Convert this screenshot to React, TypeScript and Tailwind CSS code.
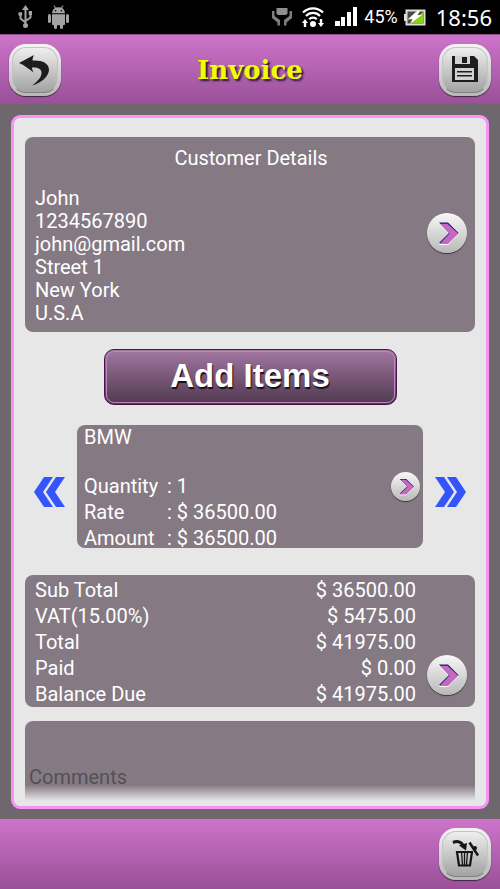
import type { ReactNode } from 'react'

const customer = ['John', '1234567890', 'john@gmail.com', 'Street 1', 'New York', 'U.S.A']

const itemRows = [
  { label: 'Quantity', value: '1' },
  { label: 'Rate', value: '$ 36500.00' },
  { label: 'Amount', value: '$ 36500.00' },
]

const totals = [
  { label: 'Sub Total', value: '$ 36500.00' },
  { label: 'VAT(15.00%)', value: '$ 5475.00' },
  { label: 'Total', value: '$ 41975.00' },
  { label: 'Paid', value: '$ 0.00' },
  { label: 'Balance Due', value: '$ 41975.00' },
]

function StatusBar() {
  return (
    <div className="flex h-[34px] items-center justify-between bg-black pl-[18px] pr-2 text-white">
      <div className="flex items-center gap-4">
        {/* USB */}
        <svg width="14" height="24" viewBox="0 0 14 24" fill="none" stroke="#a3a3a3" strokeWidth="2">
          <path d="M7.500 4v16M2.500 9v4.500l5 4M12.500 8v4.500l-5 3.500" />
          <path d="M7.500 0l3.500 5h-7z" fill="#a3a3a3" stroke="none" />
          <circle cx="7.500" cy="20.500" r="2.500" fill="#a3a3a3" stroke="none" />
          <circle cx="2.300" cy="9" r="2.100" fill="#a3a3a3" stroke="none" />
          <path d="M10.700 6h3.300v4h-3.300z" fill="#a3a3a3" stroke="none" />
        </svg>
        {/* Android robot */}
        <svg width="21" height="24" viewBox="0 0 21 24" fill="#a3a3a3">
          <path d="M4 8.200C4.200 5.500 5.500 4 7 3L5.500.8l.7-.5L7.900 2.600a8 8 0 0 1 5.200 0L14.800.3l.7.500L14 3c1.600 1 2.800 2.500 3 5.200z" />
          <path d="M4 9.200h13V19a1.300 1.300 0 0 1-1.300 1.300H15v2.200a1.500 1.500 0 0 1-3 0v-2.200H9v2.200a1.500 1.500 0 0 1-3 0v-2.200h-.7A1.300 1.300 0 0 1 4 19z" />
          <rect x="0" y="9" width="3" height="9" rx="1.500" />
          <rect x="18" y="9" width="3" height="9" rx="1.500" />
          <circle cx="7.600" cy="5.700" r=".8" fill="#000" />
          <circle cx="13.400" cy="5.700" r=".8" fill="#000" />
        </svg>
      </div>

      <div className="flex items-center">
        {/* Smart stay */}
        <svg width="20" height="18" viewBox="0 0 20 18" fill="#7d7d7d">
          <path d="M4.500 0h11v5.500l-1.500 1.500H6L4.500 5.500z" fill="#8f8f8f" />
          <path d="M0 3h2.500v5L8 12v5.500H5.500V14.500L0 10z" />
          <path d="M20 3h-2.500v5L12 12v5.500h2.500V14.500L20 10z" />
        </svg>
        {/* Wifi */}
        <svg className="ml-2.5" width="22" height="21" viewBox="0 0 22 21" fill="none" stroke="#fff">
          <path d="M1 5.500a14 14 0 0 1 20 0M4 9a9.500 9.500 0 0 1 14 0M7.200 12.300a5 5 0 0 1 7.600 0" strokeWidth="2.200" />
          <circle cx="11" cy="17" r="3" fill="#fff" stroke="none" />
          <path d="M0 16l3-4 3 4H4.200v4H1.800v-4zM16 16h1.800v-4h2.400v4H22l-3 4z" fill="#fff" stroke="none" />
        </svg>
        {/* Signal */}
        <svg className="ml-[11px]" width="22" height="20" viewBox="0 0 22 20" fill="#fff">
          <path d="M0 14h5v5H0zM6 10h4v9H6zM12 5h4v14h-4zM18 0h4v19h-4z" />
        </svg>
        <span className="ml-[7px] font-[Roboto,sans-serif] text-lg leading-5">45%</span>
        {/* Battery */}
        <svg className="ml-1.5" width="22" height="17" viewBox="0 0 22 17">
          <path d="M0 5h2v7H0z" fill="#ddd" />
          <rect x="2.500" y="1.500" width="18" height="14" fill="#4a4a4a" stroke="#ddd" strokeWidth="2" />
          <path d="M19 3v11.500H7z" fill="#86d312" />
          <path d="M13 2L3.500 10.500l5-.5-2.500 5L18.500 5.500l-5 .8L16 2z" fill="#fff" />
        </svg>
        <span className="ml-2.5 font-['Noto_Sans','Open_Sans',sans-serif] text-[22px] leading-6">18:56</span>
      </div>
    </div>
  )
}

function IconButton({ label, children }: { label: string; children: ReactNode }) {
  return (
    <button
      type="button"
      aria-label={label}
      className="size-[52px] rounded-[17px] bg-linear-to-b from-[#f4f4f4] to-[#b9b9b9] p-[3px] shadow-[0_1px_1px_#3c2a3c]"
    >
      <span className="flex size-full items-center justify-center rounded-[14px] border border-[#c4c4c4] border-b-[#808080] bg-linear-to-b from-[#efefef] to-[#a3a3a3]">
        {children}
      </span>
    </button>
  )
}

function RoundButton({ label, small = false }: { label: string; small?: boolean }) {
  return (
    <button
      type="button"
      aria-label={label}
      className={`shrink-0 rounded-full bg-linear-to-b from-[#f8f8f8] to-[#b8b8b8] shadow-[0_1px_1px_#3b343b] ${small ? 'size-[29px]' : 'size-10'}`}
    >
      <svg className="size-full" viewBox="0 0 40 40">
        <path d="M12 11h9l10 10.500L21 32h-9l10-11z" fill="#fff" />
        <path d="M12 9.500h9l10.500 10.500-10 10H12l10-10z" fill="#1f1a70" />
        <path d="M13 10.800h7.500L31 20.500 21 31h-8.500l10-10.500z" fill="#c468c0" />
      </svg>
    </button>
  )
}

function DoubleChevron({ label, next = false }: { label: string; next?: boolean }) {
  return (
    <button type="button" aria-label={label} className="mt-2.5 shrink-0">
      <svg className={next ? 'rotate-180' : ''} width="31" height="30" viewBox="0 0 31 30" fill="#3355fb">
        <path d="M0 15L10 0h9L9 15l10 15h-9zM12 15L22 0h9L21 15l10 15h-9z" />
      </svg>
    </button>
  )
}

export default function App() {
  return (
    <div className="flex min-h-screen flex-col bg-[#6e676e] font-[Roboto,sans-serif] text-xl text-white">
      <StatusBar />

      <header className="flex h-[70px] items-center justify-between border-t border-[#8f508d] bg-linear-to-b from-[#cd74ca] to-[#9a5098] px-[9px]">
        <IconButton label="Back">
          <svg width="32" height="32" viewBox="19 54 32 32" fill="#1d1d1d">
            <path d="M19 63L34 55C33 57 32.500 58.500 32.500 60.500C42 60 49 63 49 70C48.500 77 41 83 32 85.500C39 80.500 42 76 41.500 72C41 68.500 37.500 67 32 67.500C32 69 32.500 70.500 33.500 72.500C29 69 24 65 19 63Z" />
          </svg>
        </IconButton>
        <h1 className="font-['DejaVu_Serif',serif] text-[26px] leading-8 font-bold text-[#eeff00] [text-shadow:2px_2px_2px_#2b132b]">
          Invoice
        </h1>
        <IconButton label="Save">
          <svg width="32" height="32" viewBox="449 54 32 32" fill="#1d1d1d">
            <path d="M452 56h22l4 4v22h-26z" />
            <path d="M455 56h15v8h-15zM455 68h19v12h-19z" fill="#d2d2d2" />
            <path d="M462 57h5v6h-5zM457 71h15v1.500h-15zM457 75h15v1.500h-15z" />
          </svg>
        </IconButton>
      </header>

      <main className="flex flex-1 flex-col p-[11px] pb-2.5">
        <div className="flex flex-1 flex-col rounded-[9px] border-3 border-[#f893f5] bg-[#e7e7e7] px-[11px] pt-[19px] pb-[5px]">
          {/* Customer */}
          <section className="rounded-lg bg-[#857a83] pt-2.5 pr-2 pb-[7px] pl-2.5">
            <h2 className="text-center leading-[23px]">Customer Details</h2>
            <div className="mt-[17px] flex items-start justify-between">
              <address className="leading-[23px] not-italic">
                {customer.map((line) => (
                  <p key={line}>{line}</p>
                ))}
              </address>
              <div className="flex pt-[26px]">
                <RoundButton label="Edit customer" />
              </div>
            </div>
          </section>

          <button
            type="button"
            className="mt-[17px] w-[293px] self-center rounded-[10px] border border-[#431744] bg-linear-to-b from-[#a278a2] to-[#513950] p-px"
          >
            <span className="block rounded-lg border border-[#bd86bd] pb-0.5 font-['Liberation_Sans',Arial,sans-serif] text-[33px] leading-12 font-bold [text-shadow:1px_2px_1px_#1a0d1a]">
              Add Items
            </span>
          </button>

          {/* Item carousel */}
          <div className="mt-5 flex items-center gap-3 px-[9px]">
            <DoubleChevron label="Previous item" />
            <section className="flex h-[123px] flex-1 items-center justify-between rounded-lg bg-[#857a83] pr-[3px] pl-[7px]">
              <div className="flex h-full flex-col justify-between">
                <h2 className="leading-6">BMW</h2>
                <table className="text-left leading-5">
                  <tbody>
                    {itemRows.map((row) => (
                      <tr key={row.label}>
                        <th scope="row" className="w-[83px] pt-1.5 font-normal">{row.label}</th>
                        <td className="pt-1.5">: {row.value}</td>
                      </tr>
                    ))}
                  </tbody>
                </table>
              </div>
              <RoundButton label="Edit item" small />
            </section>
            <DoubleChevron label="Next item" next />
          </div>

          {/* Totals */}
          <section className="mt-[27px] flex h-[132px] items-end gap-[11px] rounded-lg bg-[#857a83] pt-0.5 pr-2 pl-2.5">
            <table className="h-full flex-1 leading-6">
              <tbody>
                {totals.map((row) => (
                  <tr key={row.label}>
                    <th scope="row" className="text-left font-normal">{row.label}</th>
                    <td className="text-right">{row.value}</td>
                  </tr>
                ))}
              </tbody>
            </table>
            <div className="flex pb-3">
              <RoundButton label="Edit totals" />
            </div>
          </section>

          <textarea
            aria-label="Comments"
            placeholder="Comments"
            rows={1}
            className="mt-3.5 min-h-20 w-full flex-1 resize-none rounded-t-lg bg-[linear-gradient(to_top,#e7e7e7,#857a83_16px)] px-1 pt-11 leading-6 placeholder:text-[#535053]"
          />
        </div>
      </main>

      <footer className="flex h-[70px] items-center justify-end bg-linear-to-b from-[#cd74ca] to-[#9a5098] px-[9px]">
        <IconButton label="Delete">
          <svg width="32" height="32" viewBox="449 839 32 32" fill="none" stroke="#151515">
            <path d="M457 853h15l-2 13.500h-11z" strokeWidth="2.200" />
            <path d="M461.500 853l1 13M467.500 853l-1 13M464.500 853v13" strokeWidth="1.300" />
            <path d="M453 843.500c5-2 9-.5 10.500 4" strokeWidth="3" />
            <path d="M459 846.500l8-2.500-1 7.500z" fill="#151515" stroke="none" />
            <path d="M469.500 843.500l8.500 13" strokeWidth="2.500" />
            <circle cx="475" cy="849" r="2" fill="#151515" stroke="none" />
          </svg>
        </IconButton>
      </footer>
    </div>
  )
}
